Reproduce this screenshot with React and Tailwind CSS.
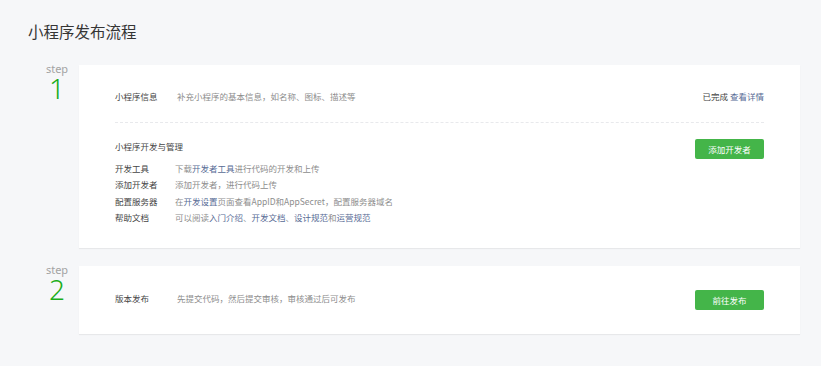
import React from "react";

const cjk = { fontFamily: '"Noto Sans CJK SC", "Noto Sans", sans-serif' };

function Step({ n }) {
  return (
    <div className="w-[51px] shrink-0 pl-[7px] text-center" style={{ fontFamily: '"Noto Sans", "Open Sans", sans-serif' }}>
      <div className="text-[11px] leading-[11px] text-[#a3a3a3] mt-[-2px]">step</div>
      <div className="text-[28px] leading-[26px] font-light text-[#1aad19] mt-[1px]">{n}</div>
    </div>
  );
}

function Btn({ children }) {
  return (
    <button className="w-[69px] h-[20px] rounded-[2px] bg-[#44b549] text-white text-[8.5px] leading-[20px] shrink-0">
      {children}
    </button>
  );
}

const Link = ({ children }) => <span className="text-[#576b95]">{children}</span>;

export default function App() {
  return (
    <div className="min-h-[366px] bg-[#f6f7f9] pl-[28px] pr-[21px] pt-[21px] pb-[30px]" style={cjk}>
      <div className="text-[15.5px] leading-[20px] text-[#353535]">小程序发布流程</div>

      <div className="flex mt-[24px]">
        <Step n="1" />
        <div className="flex-1 bg-white shadow-[0_1px_1px_rgba(0,0,0,0.06)] px-[36px] pt-[25px] pb-[22px]">
          <div className="flex items-center justify-between h-[12px] text-[8.5px] leading-[12px]">
            <div className="flex">
              <span className="w-[62px] text-[#454545]">小程序信息</span>
              <span className="text-[#8d8d8d]">补充小程序的基本信息，如名称、图标、描述等</span>
            </div>
            <div className="text-[#454545]">
              已完成 <Link>查看详情</Link>
            </div>
          </div>
          <div className="mt-[20px] border-t border-dashed border-[#e8e9ec]" />
          <div className="flex items-start justify-between mt-[16px]">
            <div className="pt-[1px] text-[8.5px] leading-[12px] text-[#454545]">小程序开发与管理</div>
            <Btn>添加开发者</Btn>
          </div>
          <div className="mt-[1px] text-[8.5px] leading-[16.4px]">
            <div className="flex">
              <span className="w-[60px] text-[#454545]">开发工具</span>
              <span className="text-[#8d8d8d]">下载<Link>开发者工具</Link>进行代码的开发和上传</span>
            </div>
            <div className="flex">
              <span className="w-[60px] text-[#454545]">添加开发者</span>
              <span className="text-[#8d8d8d]">添加开发者，进行代码上传</span>
            </div>
            <div className="flex">
              <span className="w-[60px] text-[#454545]">配置服务器</span>
              <span className="text-[#8d8d8d]">在<Link>开发设置</Link>页面查看AppID和AppSecret，配置服务器域名</span>
            </div>
            <div className="flex">
              <span className="w-[60px] text-[#454545]">帮助文档</span>
              <span className="text-[#8d8d8d]">可以阅读<Link>入门介绍</Link>、<Link>开发文档</Link>、<Link>设计规范</Link>和<Link>运营规范</Link></span>
            </div>
          </div>
        </div>
      </div>

      <div className="flex mt-[18px]">
        <Step n="2" />
        <div className="flex-1 bg-white shadow-[0_1px_1px_rgba(0,0,0,0.06)] px-[36px] pt-[24px] pb-[24px]">
          <div className="flex items-start justify-between">
            <div className="flex pt-[2px] text-[8.5px] leading-[12px]">
              <span className="w-[62px] text-[#454545]">版本发布</span>
              <span className="text-[#8d8d8d]">先提交代码，然后提交审核，审核通过后可发布</span>
            </div>
            <Btn>前往发布</Btn>
          </div>
        </div>
      </div>
    </div>
  );
}
